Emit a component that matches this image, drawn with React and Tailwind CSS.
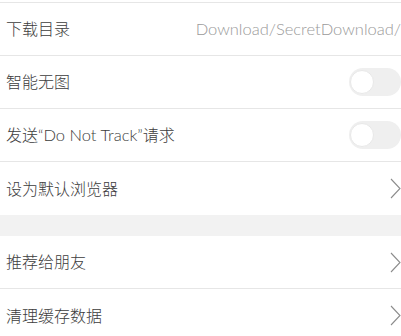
const cjk = '"Noto Sans CJK SC", sans-serif';
const latin = 'Lato, "Noto Sans CJK SC", sans-serif';

function Toggle() {
  return (
    <div className="relative h-[28px] w-[52px] shrink-0 rounded-full bg-[#efefef]">
      <div className="absolute left-[1px] top-[2px] h-[24px] w-[24px] rounded-full border border-[#e8e8e8] bg-white" />
    </div>
  );
}

function Chevron() {
  return (
    <svg width="11" height="21" viewBox="0 0 11 21" className="shrink-0">
      <path d="M1 1 L10 10.5 L1 20" fill="none" stroke="#8c8c8c" strokeWidth="1.1" />
    </svg>
  );
}

function Row({ label, right, last }) {
  return (
    <div
      className={`flex h-[53px] items-center justify-between pl-[6px] ${last ? '' : 'border-b border-[#e6e6e6]'}`}
    >
      <span className="whitespace-nowrap text-[16px] font-light text-[#3c3c3c]" style={{ fontFamily: latin }}>
        {label}
      </span>
      {right}
    </div>
  );
}

export default function App() {
  return (
    <div className="h-[336px] w-[401px] overflow-hidden bg-white" style={{ fontFamily: cjk }}>
      <div className="h-[2px] border-b border-[#e6e6e6] box-content" />
      <Row
        label="下载目录"
        right={
          <span className="whitespace-nowrap text-[16.5px] font-light text-[#9a9a9a]" style={{ fontFamily: latin }}>
            Download/SecretDownload/
          </span>
        }
      />
      <Row label="智能无图" right={<Toggle />} />
      <Row
        label={
          <>
            发送“<span className="text-[16.5px]">Do Not Track</span>”请求
          </>
        }
        right={<Toggle />}
      />
      <Row label="设为默认浏览器" right={<Chevron />} last />
      <div className="h-[21px] bg-[#f2f2f2]" />
      <Row label="推荐给朋友" right={<Chevron />} />
      <Row label="清理缓存数据" right={<Chevron />} last />
    </div>
  );
}
